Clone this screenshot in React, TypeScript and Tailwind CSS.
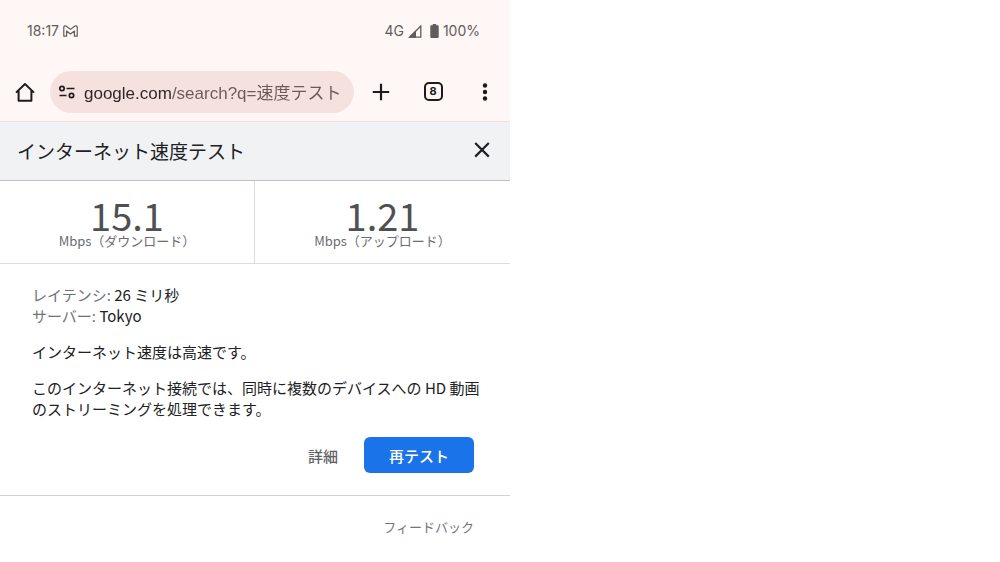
import type { ReactNode } from "react";

const results = [
  { value: "15.1", label: "Mbps（ダウンロード）" },
  { value: "1.21", label: "Mbps（アップロード）" },
];

const details = [
  { name: "レイテンシ", value: "26 ミリ秒" },
  { name: "サーバー", value: "Tokyo" },
];

function IconButton({ label, children }: { label: string; children: ReactNode }) {
  return (
    <button type="button" aria-label={label} className="flex size-6 shrink-0 items-center justify-center">
      {children}
    </button>
  );
}

function StatusBar() {
  return (
    <div className="flex h-[62px] items-center justify-between pr-[30px] pl-[27px] font-['Inter','Noto_Sans_CJK_JP',sans-serif] text-sm text-[#605c5b]">
      <div className="flex items-center gap-1">
        <span>18:17</span>
        <svg width="15" height="12" viewBox="0 0 15 12" fill="none" stroke="currentColor" strokeWidth="1.2" strokeLinejoin="round" aria-hidden="true">
          <path d="M.8 11.200V2.300C.8.900 2.300.4 3.400 1.200l4.100 3.200 4.100-3.200c1.100-.8 2.600-.3 2.600 1.100v8.900h-2.800V6L7.500 8.900 3.600 6v5.200Z" />
        </svg>
      </div>
      <div className="flex items-center gap-1">
        <span>4G</span>
        <svg width="14" height="13" viewBox="0 0 14 13" fill="none" aria-hidden="true">
          <path d="M1.600 12.200 12.800 1v11.200Z" stroke="currentColor" strokeWidth="1.300" />
          <path d="M.5 12.700 8 5.200v7.500Z" fill="currentColor" />
        </svg>
        <svg width="9" height="14" viewBox="0 0 9 14" fill="currentColor" className="ml-1" aria-hidden="true">
          <path d="M2.800 0h3.400v1.300h1.300c.7 0 1.200.5 1.200 1.200v10.200c0 .7-.5 1.300-1.200 1.300h-6C.8 14 .3 13.400.3 12.700V2.500c0-.7.5-1.200 1.200-1.200h1.300Z" />
        </svg>
        <span>100%</span>
      </div>
    </div>
  );
}

function Toolbar() {
  return (
    <div className="flex h-[60px] items-center border-b border-[#f3dfdc] px-[13px] text-[#201a1a]">
      <IconButton label="ホーム">
        <svg width="20" height="20" viewBox="0 0 20 20" fill="none" stroke="currentColor" strokeWidth="2" strokeLinejoin="round" aria-hidden="true">
          <path d="M1 10.600 10 2l9 8.600M3.600 8.500v10.300h12.800V8.500" />
        </svg>
      </IconButton>
      <div className="ml-[13px] flex h-[42px] min-w-0 flex-1 items-center gap-2 rounded-full bg-[#f5e2df] px-2">
        <svg width="18" height="14" viewBox="0 0 18 14" fill="none" stroke="currentColor" strokeWidth="1.700" className="shrink-0" aria-hidden="true">
          <circle cx="4" cy="3.500" r="2.200" />
          <path d="M8.500 3.500h8M1.500 10.500h7" />
          <circle cx="13.500" cy="10.500" r="2.200" />
        </svg>
        {/* host name is darker than the rest of the address */}
        <input
          type="text"
          aria-label="アドレス"
          defaultValue="google.com/search?q=速度テスト"
          className="h-7 w-full min-w-0 bg-linear-to-r from-[#2d2423] from-[87px] to-[#6b5a58] to-[87px] bg-clip-text font-['Liberation_Sans','Noto_Sans_CJK_JP',sans-serif] text-[17px] text-transparent outline-none"
        />
      </div>
      <div className="ml-[15px] flex items-center gap-7">
        <IconButton label="新しいタブ">
          <svg width="18" height="18" viewBox="0 0 18 18" stroke="currentColor" strokeWidth="2.200" aria-hidden="true">
            <path d="M9 .8v16.400M.8 9h16.400" />
          </svg>
        </IconButton>
        <IconButton label="タブを切り替え">
          <span className="flex size-[19px] items-center justify-center rounded-[5px] border-2 border-current font-['Inter',sans-serif] text-[11px] leading-none font-bold">
            8
          </span>
        </IconButton>
        <IconButton label="メニュー">
          <svg width="6" height="18" viewBox="0 0 6 18" fill="currentColor" aria-hidden="true">
            <circle cx="3" cy="2.500" r="2.200" />
            <circle cx="3" cy="9" r="2.200" />
            <circle cx="3" cy="15.500" r="2.200" />
          </svg>
        </IconButton>
      </div>
    </div>
  );
}

export default function App() {
  return (
    <div className="min-h-screen bg-white">
      <div className="w-full max-w-[510px] font-['Noto_Sans_CJK_JP',sans-serif] text-[15px] leading-[21px] text-[#202124]">
        <div className="bg-[#fff7f5]">
          <StatusBar />
          <Toolbar />
        </div>

        <main>
          <header className="flex h-[59px] items-center justify-between border-b border-[#c0c1c3] bg-[#f1f2f4] pr-4 pl-[17px]">
            <h1 className="text-[19px] leading-7">インターネット速度テスト</h1>
            <IconButton label="閉じる">
              <svg width="16" height="18" viewBox="0 0 16 18" stroke="currentColor" strokeWidth="2.200" aria-hidden="true">
                <path d="m1.200 1 13.600 13.600M14.800 1 1.200 14.600" />
              </svg>
            </IconButton>
          </header>

          <div className="grid grid-cols-2 divide-x divide-[#dadce0] border-b border-[#dadce0] text-center">
            {results.map((result) => (
              <div key={result.label} className="pt-[15px] pb-[15px]">
                <p className="text-[38px] leading-[38px] text-[#4f5052]">{result.value}</p>
                <p className="text-[13px] leading-[14px] text-[#6b6c6f]">{result.label}</p>
              </div>
            ))}
          </div>

          <section className="border-b border-[#d0d1d3] pt-5 pb-[22px]">
            <div className="flex flex-col gap-[15px] pr-7 pl-8">
              <div>
                {details.map((detail) => (
                  <p key={detail.name}>
                    <span className="text-[#70757a]">{detail.name}:</span> {detail.value}
                  </p>
                ))}
              </div>
              <p>インターネット速度は高速です。</p>
              <p>このインターネット接続では、同時に複数のデバイスへの HD 動画のストリーミングを処理できます。</p>
            </div>
            <div className="mt-[18px] flex items-center justify-end gap-[26px] pr-9">
              <button type="button" className="font-medium text-[#5f6368]">
                詳細
              </button>
              <button type="button" className="h-9 w-[110px] rounded-md bg-[#1a73e8] font-medium text-white">
                再テスト
              </button>
            </div>
          </section>

          <footer className="flex justify-end pt-5 pr-9">
            <a href="#feedback" className="text-[13px] text-[#70757a]">
              フィードバック
            </a>
          </footer>
        </main>
      </div>
    </div>
  );
}
